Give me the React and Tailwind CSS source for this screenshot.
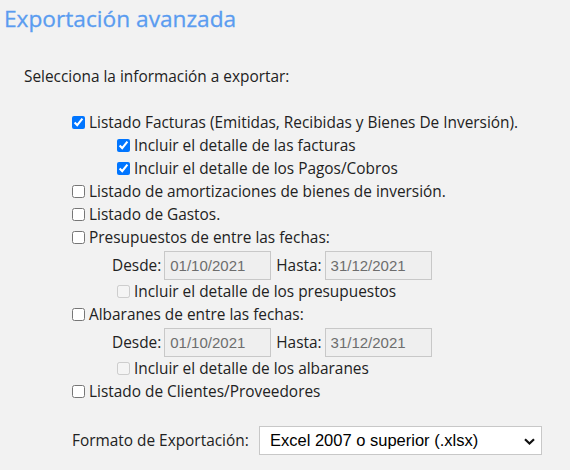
const font = { fontFamily: '"Open Sans", "Liberation Sans", sans-serif' };

function Check({ label, checked, disabled, indent }) {
  return (
    <label
      className={`flex h-[23px] items-center gap-[4px] text-[#222] ${indent ? 'pl-[117px]' : 'pl-[72px]'}`}
    >
      <input
        type="checkbox"
        defaultChecked={checked}
        disabled={disabled}
        className="h-[13px] w-[13px]"
      />
      <span>{label}</span>
    </label>
  );
}

function DateRow({ from, to }) {
  return (
    <div className="mt-[2px] flex h-[29px] items-start pl-[112px] text-[#222]">
      <span className="mr-[3px] leading-[29px]">Desde:</span>
      <input
        disabled
        defaultValue={from}
        className="h-[29px] w-[107px] border border-[#c8c8c8] bg-[#efefef] px-[5px] font-['Liberation_Sans',Arial,sans-serif] text-[15px] text-[#6d6d6d]"
      />
      <span className="ml-[5px] mr-[3px] leading-[29px]">Hasta:</span>
      <input
        disabled
        defaultValue={to}
        className="h-[29px] w-[107px] border border-[#c8c8c8] bg-[#efefef] px-[5px] font-['Liberation_Sans',Arial,sans-serif] text-[15px] text-[#6d6d6d]"
      />
    </div>
  );
}

export default function App() {
  return (
    <div className="h-[470px] w-[570px] overflow-hidden bg-[#f2f2f2] text-[15.4px]" style={font}>
      <h1 className="pl-[4px] pt-[4px] text-[22.7px] leading-[30px] text-[#5a9cf0] [-webkit-text-stroke:0.3px_#5a9cf0]">
        Exportación avanzada
      </h1>

      <p className="mt-[32px] pl-[24px] leading-[22px] text-[#222]">
        Selecciona la información a exportar:
      </p>

      <div className="mt-[23px] flex flex-col">
        <Check checked label="Listado Facturas (Emitidas, Recibidas y Bienes De Inversión)." />
        <Check checked indent label="Incluir el detalle de las facturas" />
        <Check checked indent label="Incluir el detalle de los Pagos/Cobros" />
        <Check label="Listado de amortizaciones de bienes de inversión." />
        <Check label="Listado de Gastos." />
        <Check label="Presupuestos de entre las fechas:" />
        <DateRow from="01/10/2021" to="31/12/2021" />
        <Check disabled indent label="Incluir el detalle de los presupuestos" />
        <Check label="Albaranes de entre las fechas:" />
        <DateRow from="01/10/2021" to="31/12/2021" />
        <Check disabled indent label="Incluir el detalle de los albaranes" />
        <Check label="Listado de Clientes/Proveedores" />
      </div>

      <div className="mt-[23px] flex items-center pl-[72px] text-[#222]">
        <span className="w-[187px]">Formato de Exportación:</span>
        <div className="relative">
          <select
            defaultValue="xlsx"
            className="h-[29px] w-[283px] appearance-none border border-[#c8c8c8] bg-white pl-[10px] font-['Liberation_Sans',Arial,sans-serif] text-[16.5px] text-black"
          >
            <option value="xlsx">Excel 2007 o superior (.xlsx)</option>
            <option value="xls">Excel 97-2003 (.xls)</option>
            <option value="csv">CSV (.csv)</option>
          </select>
          <svg
            className="pointer-events-none absolute right-[7px] top-[12px]"
            width="11"
            height="7"
            viewBox="0 0 11 7"
          >
            <path d="M1 1.2 L5.5 5.5 L10 1.2" fill="none" stroke="#111" strokeWidth="2.2" />
          </svg>
        </div>
      </div>
    </div>
  );
}
